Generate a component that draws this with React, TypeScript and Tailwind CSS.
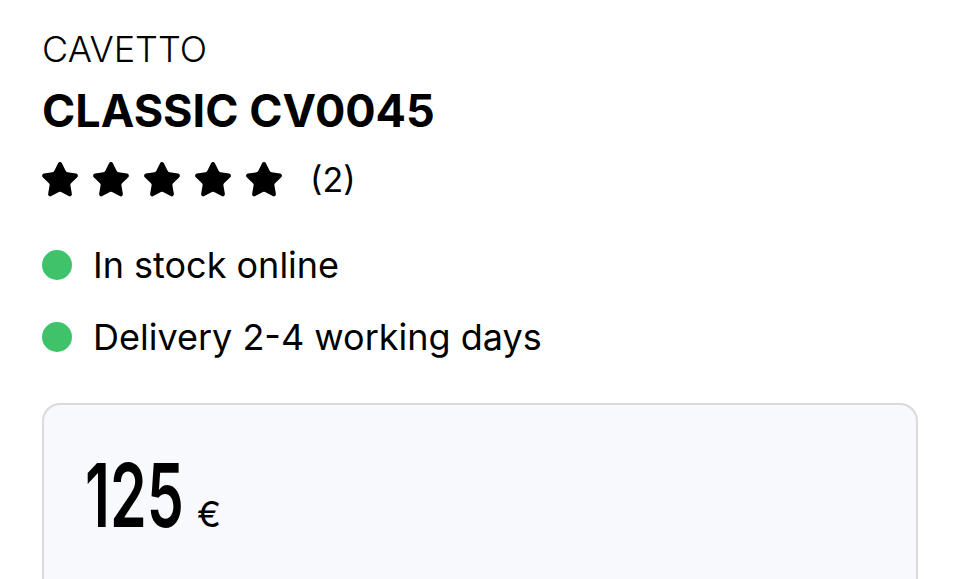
import React from 'react';
import { Star } from 'lucide-react';

const App = () => {
  const statuses = ['In stock online', 'Delivery 2-4 working days'];

  return (
    <div className="min-h-screen bg-white px-[42px] pt-[29px] text-black font-['Inter',sans-serif]">
      {/* Brand + model */}
      <p className="text-[36px] leading-[40px] font-light">CAVETTO</p>
      <h1 className="mt-[16px] text-[45px] leading-[52px] font-bold">CLASSIC CV0045</h1>

      {/* Rating */}
      <div className="mt-[25px] ml-[-2px] flex h-[36px] items-center">
        <div className="flex gap-[11px]">
          {[0, 1, 2, 3, 4].map((i) => (
            <Star key={i} size={40} fill="black" strokeWidth={1.5} className="shrink-0" />
          ))}
        </div>
        <span className="ml-[26px] text-[34px] leading-[40px]">(2)</span>
      </div>

      {/* Availability */}
      <div className="mt-[47px] flex flex-col gap-[32px]">
        {statuses.map((label) => (
          <div key={label} className="flex h-[40px] items-center gap-[21px]">
            <span className="h-[30px] w-[30px] shrink-0 rounded-full bg-[#3ec36a]" />
            <span className="text-[36px] leading-[40px]">{label}</span>
          </div>
        ))}
      </div>

      {/* Price card */}
      <div className="mt-[46px] h-[260px] rounded-[18px] border-2 border-[#dadadd] bg-[#f7f9fd] pl-[41px] pt-[46px]">
        <div className="flex items-baseline">
          <span className="inline-block w-[100px] text-[88px] leading-[88px] font-semibold">
            <span className="inline-block origin-left scale-x-[0.67]">125</span>
          </span>
          <span className="ml-[12px] text-[36px]">€</span>
        </div>
      </div>
    </div>
  );
};

export default App;
